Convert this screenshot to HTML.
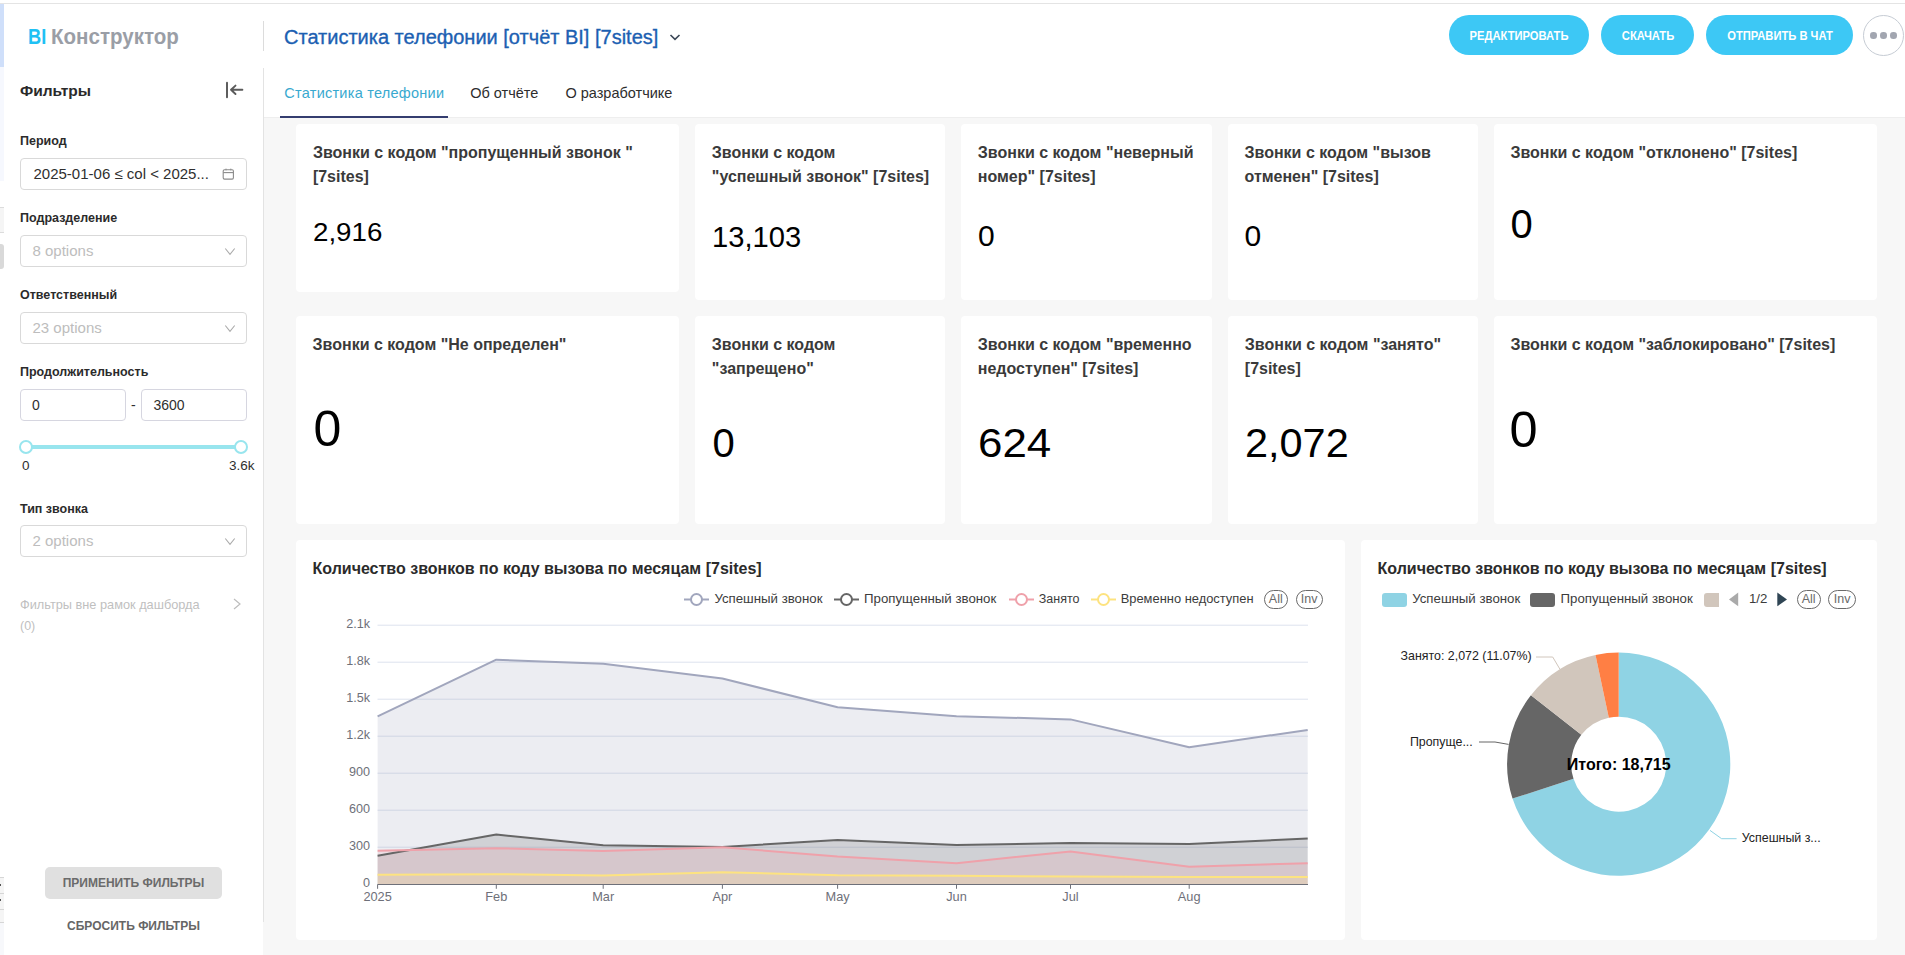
<!DOCTYPE html>
<html><head><meta charset="utf-8"><title>BI</title>
<style>
html,body{margin:0;padding:0;}
body{width:1905px;height:955px;overflow:hidden;position:relative;background:#fff;font-family:"Liberation Sans", sans-serif;}
.t{position:absolute;white-space:nowrap;line-height:1;}
.r{position:absolute;}
</style></head><body>
<div class="r" style="left:0px;top:3px;width:1905px;height:1px;background:#e4e4e4;"></div>
<div class="r" style="left:264px;top:118px;width:1641px;height:837px;background:#f7f7f7;"></div>
<div class="r" style="left:0px;top:4px;width:4px;height:63px;background:#cfdffa;"></div>
<div class="r" style="left:0px;top:67px;width:4px;height:114px;background:#f6f8fe;"></div>
<div class="r" style="left:0px;top:207px;width:4px;height:26px;background:#f5f5f5;border-top:1px solid #dcdcdc;border-bottom:1px solid #dcdcdc;box-sizing:border-box;"></div>
<div class="r" style="left:-4px;top:244px;width:8px;height:25px;background:#d9d9d9;border-radius:3px;"></div>
<div class="r" style="left:0px;top:877px;width:4px;height:45px;background:#f5f5f5;"></div>
<div class="r" style="left:0px;top:877px;width:4px;height:1px;background:#d6d6d6;"></div>
<div class="r" style="left:0px;top:893px;width:4px;height:1px;background:#d6d6d6;"></div>
<div class="r" style="left:0px;top:909px;width:4px;height:1px;background:#d6d6d6;"></div>
<div class="r" style="left:0px;top:922px;width:4px;height:1px;background:#d6d6d6;"></div>
<div class="r" style="left:0px;top:884px;width:1px;height:2px;background:#555;"></div>
<div class="r" style="left:0px;top:899px;width:1px;height:2px;background:#555;"></div>
<div class="r" style="left:0px;top:923px;width:4px;height:32px;background:#f7f8fb;"></div>
<div class="t" style="left:28.0px;top:27.0px;font-size:21.5px;color:#1fc1f4;font-weight:700;transform-origin:0 0;transform:scaleX(0.85);">BI</div>
<div class="t" style="left:51.0px;top:27.0px;font-size:21.5px;color:#9a9ea6;font-weight:700;transform-origin:0 0;transform:scaleX(0.955);">Конструктор</div>
<div class="r" style="left:263px;top:21px;width:1px;height:30px;background:#dcdcdc;"></div>
<div class="t" style="left:284.0px;top:27.0px;font-size:20px;color:#1c5fb2;font-weight:400;-webkit-text-stroke:0.35px #1c5fb2;">Статистика телефонии [отчёт BI] [7sites]</div>
<svg class="r" style="left:668px;top:31px" width="14" height="12" viewBox="0 0 14 12"><path d="M2.5 4 L7 8.3 L11.5 4" fill="none" stroke="#3b4757" stroke-width="1.6"/></svg>
<div class="r" style="left:1449px;top:15px;width:140px;height:40px;background:#3dc8f5;border-radius:20px;"></div>
<div class="t" style="left:1519.0px;top:30.0px;font-size:12.5px;color:#fff;font-weight:700;transform-origin:50% 0;transform:translateX(-50%) scaleX(0.895);">РЕДАКТИРОВАТЬ</div>
<div class="r" style="left:1601px;top:15px;width:93px;height:40px;background:#3dc8f5;border-radius:20px;"></div>
<div class="t" style="left:1647.5px;top:30.0px;font-size:12.5px;color:#fff;font-weight:700;transform-origin:50% 0;transform:translateX(-50%) scaleX(0.895);">СКАЧАТЬ</div>
<div class="r" style="left:1706px;top:15px;width:147px;height:40px;background:#3dc8f5;border-radius:20px;"></div>
<div class="t" style="left:1779.5px;top:30.0px;font-size:12.5px;color:#fff;font-weight:700;transform-origin:50% 0;transform:translateX(-50%) scaleX(0.895);">ОТПРАВИТЬ В ЧАТ</div>
<div class="r" style="left:1863px;top:15px;width:41px;height:41px;background:#fff;border:1px solid #c6ccd4;border-radius:50%;box-sizing:border-box;"></div>
<div class="r" style="left:1870.35px;top:32.25px;width:6.5px;height:6.5px;background:#a2a6b0;border-radius:50%;"></div>
<div class="r" style="left:1880.15px;top:32.25px;width:6.5px;height:6.5px;background:#a2a6b0;border-radius:50%;"></div>
<div class="r" style="left:1890.05px;top:32.25px;width:6.5px;height:6.5px;background:#a2a6b0;border-radius:50%;"></div>
<div class="r" style="left:263px;top:68px;width:1px;height:854px;background:#e3e3e3;"></div>
<div class="r" style="left:263px;top:922px;width:1px;height:33px;background:#f7f7f7;"></div>
<div class="t" style="left:20.0px;top:83.0px;font-size:15.5px;color:#2a2a2a;font-weight:700;">Фильтры</div>
<svg class="r" style="left:224px;top:80px" width="22" height="20" viewBox="0 0 22 20"><path d="M3 2.8 V17.2" stroke="#555" stroke-width="1.9" stroke-linecap="round"/><path d="M18.4 9.8 H7 M11.5 5.6 L7 9.8 L11.5 14" fill="none" stroke="#5a5a5a" stroke-width="1.9" stroke-linecap="round" stroke-linejoin="round"/></svg>
<div class="t" style="left:20.0px;top:135.0px;font-size:12.5px;color:#2b2b2b;font-weight:700;">Период</div>
<div class="r" style="left:20px;top:158px;width:227px;height:32px;background:#fff;border:1px solid #d9d9d9;border-radius:4px;box-sizing:border-box;"></div>
<div class="t" style="left:33.5px;top:166.0px;font-size:15px;color:#2f2f2f;font-weight:400;">2025-01-06 ≤ col &lt; 2025...</div>
<svg class="r" style="left:221px;top:167px" width="14" height="14" viewBox="0 0 14 14"><rect x="2.2" y="2.8" width="10.2" height="9.3" rx="1.3" fill="none" stroke="#8a8a8a" stroke-width="1.1"/><path d="M2.2 5.6 H12.4" stroke="#8a8a8a" stroke-width="1.1"/><path d="M5 1.6 V3.4 M9.8 1.6 V3.4" stroke="#8a8a8a" stroke-width="0.9"/></svg>
<div class="t" style="left:20.0px;top:212.0px;font-size:12.5px;color:#2b2b2b;font-weight:700;">Подразделение</div>
<div class="r" style="left:20px;top:235px;width:227px;height:32px;background:#fff;border:1px solid #d9d9d9;border-radius:4px;box-sizing:border-box;"></div>
<div class="t" style="left:32.5px;top:243.0px;font-size:15px;color:#bdbdbd;font-weight:400;">8 options</div>
<svg class="r" style="left:223px;top:247px" width="14" height="10" viewBox="0 0 14 10"><path d="M2.3 1.5 L7 7.4 L11.7 1.5" fill="none" stroke="#ababab" stroke-width="1.1"/></svg>
<div class="t" style="left:20.0px;top:289.0px;font-size:12.5px;color:#2b2b2b;font-weight:700;">Ответственный</div>
<div class="r" style="left:20px;top:312px;width:227px;height:32px;background:#fff;border:1px solid #d9d9d9;border-radius:4px;box-sizing:border-box;"></div>
<div class="t" style="left:32.5px;top:320.0px;font-size:15px;color:#bdbdbd;font-weight:400;">23 options</div>
<svg class="r" style="left:223px;top:324px" width="14" height="10" viewBox="0 0 14 10"><path d="M2.3 1.5 L7 7.4 L11.7 1.5" fill="none" stroke="#ababab" stroke-width="1.1"/></svg>
<div class="t" style="left:20.0px;top:366.0px;font-size:12.5px;color:#2b2b2b;font-weight:700;">Продолжительность</div>
<div class="r" style="left:20px;top:389px;width:106px;height:32px;background:#fff;border:1px solid #d6d6e0;border-radius:4px;box-sizing:border-box;"></div>
<div class="r" style="left:141px;top:389px;width:106px;height:32px;background:#fff;border:1px solid #d6d6e0;border-radius:4px;box-sizing:border-box;"></div>
<div class="t" style="left:32.0px;top:398.0px;font-size:14px;color:#2f2f2f;font-weight:400;">0</div>
<div class="t" style="left:131.0px;top:398.0px;font-size:14px;color:#2f2f2f;font-weight:400;">-</div>
<div class="t" style="left:153.5px;top:398.0px;font-size:14px;color:#2f2f2f;font-weight:400;">3600</div>
<div class="r" style="left:26px;top:445px;width:215px;height:4px;background:#98e5ee;"></div>
<div class="r" style="left:19px;top:440px;width:14px;height:14px;background:#fff;border:2px solid #98e5ee;border-radius:50%;box-sizing:border-box;"></div>
<div class="r" style="left:234px;top:440px;width:14px;height:14px;background:#fff;border:2px solid #98e5ee;border-radius:50%;box-sizing:border-box;"></div>
<div class="t" style="left:22.0px;top:459.0px;font-size:13.5px;color:#2f2f2f;font-weight:400;">0</div>
<div class="t" style="right:1650.5px;top:459.0px;font-size:13.5px;color:#2f2f2f;font-weight:400;">3.6k</div>
<div class="t" style="left:20.0px;top:503.0px;font-size:12.5px;color:#2b2b2b;font-weight:700;">Тип звонка</div>
<div class="r" style="left:20px;top:525px;width:227px;height:32px;background:#fff;border:1px solid #d9d9d9;border-radius:4px;box-sizing:border-box;"></div>
<div class="t" style="left:32.5px;top:533.0px;font-size:15px;color:#bdbdbd;font-weight:400;">2 options</div>
<svg class="r" style="left:223px;top:537px" width="14" height="10" viewBox="0 0 14 10"><path d="M2.3 1.5 L7 7.4 L11.7 1.5" fill="none" stroke="#ababab" stroke-width="1.1"/></svg>
<div class="t" style="left:20.0px;top:599.0px;font-size:12.75px;color:#bfbfbf;font-weight:400;">Фильтры вне рамок дашборда</div>
<div class="t" style="left:20.0px;top:620.0px;font-size:12.5px;color:#bfbfbf;font-weight:400;">(0)</div>
<svg class="r" style="left:231px;top:597px" width="12" height="14" viewBox="0 0 12 14"><path d="M3 2 L9 7 L3 12" fill="none" stroke="#bdbdbd" stroke-width="1.2"/></svg>
<div class="r" style="left:45px;top:867px;width:177px;height:32px;background:#e0e0e0;border-radius:5px;"></div>
<div class="t" style="left:133.5px;top:877.0px;font-size:12px;color:#6b6b6b;font-weight:700;transform:translateX(-50%);">ПРИМЕНИТЬ ФИЛЬТРЫ</div>
<div class="t" style="left:133.5px;top:920.0px;font-size:12px;color:#666;font-weight:700;transform:translateX(-50%);">СБРОСИТЬ ФИЛЬТРЫ</div>
<div class="t" style="left:284.3px;top:86.0px;font-size:14.5px;color:#38a9cf;font-weight:400;letter-spacing:0.25px;">Статистика телефонии</div>
<div class="t" style="left:470.2px;top:86.0px;font-size:14.5px;color:#2d2d2d;font-weight:400;">Об отчёте</div>
<div class="t" style="left:565.4px;top:86.0px;font-size:14.5px;color:#2d2d2d;font-weight:400;">О разработчике</div>
<div class="r" style="left:264px;top:117px;width:1641px;height:1px;background:#eeeeee;"></div>
<div class="r" style="left:280px;top:116px;width:168px;height:2px;background:#343d6f;"></div>
<div class="r" style="left:296px;top:124px;width:383px;height:168px;background:#fff;border-radius:4px;"></div>
<div class="r" style="left:695px;top:124px;width:250px;height:176px;background:#fff;border-radius:4px;"></div>
<div class="r" style="left:961px;top:124px;width:251px;height:176px;background:#fff;border-radius:4px;"></div>
<div class="r" style="left:1228px;top:124px;width:250px;height:176px;background:#fff;border-radius:4px;"></div>
<div class="r" style="left:1494px;top:124px;width:383px;height:176px;background:#fff;border-radius:4px;"></div>
<div class="r" style="left:296px;top:316px;width:383px;height:208px;background:#fff;border-radius:4px;"></div>
<div class="r" style="left:695px;top:316px;width:250px;height:208px;background:#fff;border-radius:4px;"></div>
<div class="r" style="left:961px;top:316px;width:251px;height:208px;background:#fff;border-radius:4px;"></div>
<div class="r" style="left:1228px;top:316px;width:250px;height:208px;background:#fff;border-radius:4px;"></div>
<div class="r" style="left:1494px;top:316px;width:383px;height:208px;background:#fff;border-radius:4px;"></div>
<div class="t" style="left:312.9px;top:145.0px;font-size:16px;color:#3a3a3a;font-weight:700;">Звонки с кодом "пропущенный звонок "</div>
<div class="t" style="left:312.9px;top:169.0px;font-size:16px;color:#3a3a3a;font-weight:700;">[7sites]</div>
<div class="t" style="left:312.5px;top:220.0px;font-size:25.5px;color:#000;font-weight:400;transform-origin:0 0;transform:scaleX(1.087);">2,916</div>
<div class="t" style="left:711.8px;top:145.0px;font-size:16px;color:#3a3a3a;font-weight:700;">Звонки с кодом</div>
<div class="t" style="left:711.8px;top:169.0px;font-size:16px;color:#3a3a3a;font-weight:700;">"успешный звонок" [7sites]</div>
<div class="t" style="left:711.5px;top:222.0px;font-size:30px;color:#000;font-weight:400;transform-origin:0 0;transform:scaleX(0.972);">13,103</div>
<div class="t" style="left:977.8px;top:145.0px;font-size:16px;color:#3a3a3a;font-weight:700;">Звонки с кодом "неверный</div>
<div class="t" style="left:977.8px;top:169.0px;font-size:16px;color:#3a3a3a;font-weight:700;">номер" [7sites]</div>
<div class="t" style="left:978.0px;top:221.0px;font-size:30px;color:#000;font-weight:400;">0</div>
<div class="t" style="left:1244.5px;top:145.0px;font-size:16px;color:#3a3a3a;font-weight:700;">Звонки с кодом "вызов</div>
<div class="t" style="left:1244.5px;top:169.0px;font-size:16px;color:#3a3a3a;font-weight:700;">отменен" [7sites]</div>
<div class="t" style="left:1244.5px;top:221.0px;font-size:30px;color:#000;font-weight:400;">0</div>
<div class="t" style="left:1510.4px;top:145.0px;font-size:16px;color:#3a3a3a;font-weight:700;">Звонки с кодом "отклонено" [7sites]</div>
<div class="t" style="left:1510.4px;top:204.0px;font-size:40px;color:#000;font-weight:400;">0</div>
<div class="t" style="left:312.6px;top:337.0px;font-size:16px;color:#3a3a3a;font-weight:700;">Звонки с кодом "Не определен"</div>
<div class="t" style="left:313.5px;top:404.0px;font-size:50px;color:#000;font-weight:400;">0</div>
<div class="t" style="left:711.8px;top:337.0px;font-size:16px;color:#3a3a3a;font-weight:700;">Звонки с кодом</div>
<div class="t" style="left:711.8px;top:361.0px;font-size:16px;color:#3a3a3a;font-weight:700;">"запрещено"</div>
<div class="t" style="left:712.5px;top:423.0px;font-size:40px;color:#000;font-weight:400;">0</div>
<div class="t" style="left:977.8px;top:337.0px;font-size:16px;color:#3a3a3a;font-weight:700;">Звонки с кодом "временно</div>
<div class="t" style="left:977.8px;top:361.0px;font-size:16px;color:#3a3a3a;font-weight:700;">недоступен" [7sites]</div>
<div class="t" style="left:977.5px;top:423.0px;font-size:40px;color:#000;font-weight:400;transform-origin:0 0;transform:scaleX(1.098);">624</div>
<div class="t" style="left:1244.8px;top:337.0px;font-size:16px;color:#3a3a3a;font-weight:700;">Звонки с кодом "занято"</div>
<div class="t" style="left:1244.8px;top:361.0px;font-size:16px;color:#3a3a3a;font-weight:700;">[7sites]</div>
<div class="t" style="left:1244.8px;top:423.0px;font-size:40px;color:#000;font-weight:400;transform-origin:0 0;transform:scaleX(1.036);">2,072</div>
<div class="t" style="left:1510.4px;top:337.0px;font-size:16px;color:#3a3a3a;font-weight:700;">Звонки с кодом "заблокировано" [7sites]</div>
<div class="t" style="left:1509.5px;top:405.0px;font-size:50.5px;color:#000;font-weight:400;">0</div>
<div class="r" style="left:296px;top:540px;width:1049px;height:400px;background:#fff;border-radius:4px;"></div>
<div class="r" style="left:1361px;top:540px;width:516px;height:400px;background:#fff;border-radius:4px;"></div>
<div class="t" style="left:312.5px;top:561.0px;font-size:16px;color:#2b2b2b;font-weight:700;">Количество звонков по коду вызова по месяцам [7sites]</div>
<div class="t" style="left:1377.5px;top:561.0px;font-size:16px;color:#2b2b2b;font-weight:700;">Количество звонков по коду вызова по месяцам [7sites]</div>
<svg class="r" style="left:0;top:0" width="1905" height="955" viewBox="0 0 1905 955"><line x1="377.5" y1="847.2" x2="1308" y2="847.2" stroke="#dde3ee" stroke-width="1"/><line x1="377.5" y1="810.2" x2="1308" y2="810.2" stroke="#dde3ee" stroke-width="1"/><line x1="377.5" y1="773.2" x2="1308" y2="773.2" stroke="#dde3ee" stroke-width="1"/><line x1="377.5" y1="736.2" x2="1308" y2="736.2" stroke="#dde3ee" stroke-width="1"/><line x1="377.5" y1="699.2" x2="1308" y2="699.2" stroke="#dde3ee" stroke-width="1"/><line x1="377.5" y1="662.2" x2="1308" y2="662.2" stroke="#dde3ee" stroke-width="1"/><line x1="377.5" y1="625.2" x2="1308" y2="625.2" stroke="#dde3ee" stroke-width="1"/><polygon points="377.6,884.2 377.6,716.3 496.3,659.7 603.2,663.7 722.4,678.5 837.6,707.3 956.5,716.2 1070.5,719.4 1189.2,747.2 1307.7,729.9 1307.7,884.2" fill="#A1A6BD" fill-opacity="0.2"/><polygon points="377.6,884.2 377.6,855.8 496.3,834.6 603.2,845.2 722.4,847.0 837.6,840.0 956.5,845.0 1070.5,843.1 1189.2,843.9 1307.7,838.5 1307.7,884.2" fill="#666666" fill-opacity="0.2"/><polygon points="377.6,884.2 377.6,850.7 496.3,848.2 603.2,851.0 722.4,847.2 837.6,856.5 956.5,863.2 1070.5,851.4 1189.2,866.8 1307.7,863.2 1307.7,884.2" fill="#EFA1AA" fill-opacity="0.2"/><polygon points="377.6,884.2 377.6,874.7 496.3,874.2 603.2,875.4 722.4,872.2 837.6,875.3 956.5,875.8 1070.5,876.6 1189.2,877.1 1307.7,877.1 1307.7,884.2" fill="#FDE380" fill-opacity="0.2"/><polyline points="377.6,716.3 496.3,659.7 603.2,663.7 722.4,678.5 837.6,707.3 956.5,716.2 1070.5,719.4 1189.2,747.2 1307.7,729.9" fill="none" stroke="#A1A6BD" stroke-width="2" stroke-linejoin="round"/><polyline points="377.6,855.8 496.3,834.6 603.2,845.2 722.4,847.0 837.6,840.0 956.5,845.0 1070.5,843.1 1189.2,843.9 1307.7,838.5" fill="none" stroke="#666666" stroke-width="2" stroke-linejoin="round"/><polyline points="377.6,850.7 496.3,848.2 603.2,851.0 722.4,847.2 837.6,856.5 956.5,863.2 1070.5,851.4 1189.2,866.8 1307.7,863.2" fill="none" stroke="#EFA1AA" stroke-width="2" stroke-linejoin="round"/><polyline points="377.6,874.7 496.3,874.2 603.2,875.4 722.4,872.2 837.6,875.3 956.5,875.8 1070.5,876.6 1189.2,877.1 1307.7,877.1" fill="none" stroke="#FDE380" stroke-width="2" stroke-linejoin="round"/><line x1="377.5" y1="884.5" x2="1308" y2="884.5" stroke="#6E7079" stroke-width="1"/><line x1="377.6" y1="884.5" x2="377.6" y2="888.8" stroke="#6E7079" stroke-width="1"/><line x1="496.3" y1="884.5" x2="496.3" y2="888.8" stroke="#6E7079" stroke-width="1"/><line x1="603.2" y1="884.5" x2="603.2" y2="888.8" stroke="#6E7079" stroke-width="1"/><line x1="722.4" y1="884.5" x2="722.4" y2="888.8" stroke="#6E7079" stroke-width="1"/><line x1="837.6" y1="884.5" x2="837.6" y2="888.8" stroke="#6E7079" stroke-width="1"/><line x1="956.5" y1="884.5" x2="956.5" y2="888.8" stroke="#6E7079" stroke-width="1"/><line x1="1070.5" y1="884.5" x2="1070.5" y2="888.8" stroke="#6E7079" stroke-width="1"/><line x1="1189.2" y1="884.5" x2="1189.2" y2="888.8" stroke="#6E7079" stroke-width="1"/></svg>
<div class="t" style="right:1535.0px;top:877.0px;font-size:12.6px;color:#6E7079;font-weight:400;">0</div>
<div class="t" style="right:1535.0px;top:840.0px;font-size:12.6px;color:#6E7079;font-weight:400;">300</div>
<div class="t" style="right:1535.0px;top:803.0px;font-size:12.6px;color:#6E7079;font-weight:400;">600</div>
<div class="t" style="right:1535.0px;top:766.0px;font-size:12.6px;color:#6E7079;font-weight:400;">900</div>
<div class="t" style="right:1535.0px;top:729.0px;font-size:12.6px;color:#6E7079;font-weight:400;">1.2k</div>
<div class="t" style="right:1535.0px;top:692.0px;font-size:12.6px;color:#6E7079;font-weight:400;">1.5k</div>
<div class="t" style="right:1535.0px;top:655.0px;font-size:12.6px;color:#6E7079;font-weight:400;">1.8k</div>
<div class="t" style="right:1535.0px;top:618.0px;font-size:12.6px;color:#6E7079;font-weight:400;">2.1k</div>
<div class="t" style="left:377.6px;top:891.0px;font-size:12.75px;color:#6E7079;font-weight:400;transform:translateX(-50%);">2025</div>
<div class="t" style="left:496.3px;top:891.0px;font-size:12.75px;color:#6E7079;font-weight:400;transform:translateX(-50%);">Feb</div>
<div class="t" style="left:603.2px;top:891.0px;font-size:12.75px;color:#6E7079;font-weight:400;transform:translateX(-50%);">Mar</div>
<div class="t" style="left:722.4px;top:891.0px;font-size:12.75px;color:#6E7079;font-weight:400;transform:translateX(-50%);">Apr</div>
<div class="t" style="left:837.6px;top:891.0px;font-size:12.75px;color:#6E7079;font-weight:400;transform:translateX(-50%);">May</div>
<div class="t" style="left:956.5px;top:891.0px;font-size:12.75px;color:#6E7079;font-weight:400;transform:translateX(-50%);">Jun</div>
<div class="t" style="left:1070.5px;top:891.0px;font-size:12.75px;color:#6E7079;font-weight:400;transform:translateX(-50%);">Jul</div>
<div class="t" style="left:1189.2px;top:891.0px;font-size:12.75px;color:#6E7079;font-weight:400;transform:translateX(-50%);">Aug</div>
<svg class="r" style="left:684px;top:591px" width="26" height="16" viewBox="0 0 26 16"><line x1="0" y1="8.5" x2="25" y2="8.5" stroke="#A1A6BD" stroke-width="2"/><circle cx="12.5" cy="8.5" r="5.5" fill="#fff" stroke="#A1A6BD" stroke-width="2"/></svg>
<div class="t" style="left:714.4px;top:592.0px;font-size:13.25px;color:#3c3c3c;font-weight:400;">Успешный звонок</div>
<svg class="r" style="left:834px;top:591px" width="26" height="16" viewBox="0 0 26 16"><line x1="0" y1="8.5" x2="25" y2="8.5" stroke="#666666" stroke-width="2"/><circle cx="12.5" cy="8.5" r="5.5" fill="#fff" stroke="#666666" stroke-width="2"/></svg>
<div class="t" style="left:864.0px;top:592.0px;font-size:13.25px;color:#3c3c3c;font-weight:400;">Пропущенный звонок</div>
<svg class="r" style="left:1008.5px;top:591px" width="26" height="16" viewBox="0 0 26 16"><line x1="0" y1="8.5" x2="25" y2="8.5" stroke="#EFA1AA" stroke-width="2"/><circle cx="12.5" cy="8.5" r="5.5" fill="#fff" stroke="#EFA1AA" stroke-width="2"/></svg>
<div class="t" style="left:1038.8px;top:593.0px;font-size:12.5px;color:#3c3c3c;font-weight:400;">Занято</div>
<svg class="r" style="left:1090.5px;top:591px" width="26" height="16" viewBox="0 0 26 16"><line x1="0" y1="8.5" x2="25" y2="8.5" stroke="#FDE380" stroke-width="2"/><circle cx="12.5" cy="8.5" r="5.5" fill="#fff" stroke="#FDE380" stroke-width="2"/></svg>
<div class="t" style="left:1120.7px;top:593.0px;font-size:12.9px;color:#3c3c3c;font-weight:400;">Временно недоступен</div>
<div class="r" style="left:1263.5px;top:590px;width:24.5px;height:19px;background:transparent;border:1px solid #6a6a6a;border-radius:10px;box-sizing:border-box;"></div>
<div class="t" style="left:1275.8px;top:593.0px;font-size:12.5px;color:#6a6a6a;font-weight:400;transform:translateX(-50%);">All</div>
<div class="r" style="left:1295.5px;top:590px;width:27.5px;height:19px;background:transparent;border:1px solid #6a6a6a;border-radius:10px;box-sizing:border-box;"></div>
<div class="t" style="left:1309.2px;top:593.0px;font-size:12.5px;color:#6a6a6a;font-weight:400;transform:translateX(-50%);">Inv</div>
<div class="r" style="left:1382px;top:592.5px;width:25px;height:14px;background:#8FD3E4;border-radius:3px;"></div>
<div class="t" style="left:1412.2px;top:592.0px;font-size:13.25px;color:#3c3c3c;font-weight:400;">Успешный звонок</div>
<div class="r" style="left:1530px;top:592.5px;width:25px;height:14px;background:#666666;border-radius:3px;"></div>
<div class="t" style="left:1560.5px;top:592.0px;font-size:13.25px;color:#3c3c3c;font-weight:400;">Пропущенный звонок</div>
<div class="r" style="left:1704.3px;top:592.5px;width:15px;height:14px;background:#D1C6BC;border-radius:3px 0 0 3px;"></div>
<svg class="r" style="left:1728px;top:591px" width="60" height="17" viewBox="0 0 60 17"><path d="M10.2 1.5 L1 8.4 L10.2 15.3 Z" fill="#aaa"/><path d="M49.3 1.5 L59 8.4 L49.3 15.3 Z" fill="#2f4554"/></svg>
<div class="t" style="left:1749.0px;top:592.0px;font-size:13.25px;color:#3c3c3c;font-weight:400;">1/2</div>
<div class="r" style="left:1796.7px;top:590px;width:23.899999999999864px;height:19px;background:transparent;border:1px solid #6a6a6a;border-radius:10px;box-sizing:border-box;"></div>
<div class="t" style="left:1808.7px;top:593.0px;font-size:12.5px;color:#6a6a6a;font-weight:400;transform:translateX(-50%);">All</div>
<div class="r" style="left:1828.4px;top:590px;width:27.59999999999991px;height:19px;background:transparent;border:1px solid #6a6a6a;border-radius:10px;box-sizing:border-box;"></div>
<div class="t" style="left:1842.2px;top:593.0px;font-size:12.5px;color:#6a6a6a;font-weight:400;transform:translateX(-50%);">Inv</div>
<svg class="r" style="left:0;top:0" width="1905" height="955" viewBox="0 0 1905 955"><path d="M1618.70 652.60 A111.6 111.6 0 1 1 1512.53 798.60 L1573.51 778.84 A47.5 47.5 0 1 0 1618.70 716.70 Z" fill="#8FD3E4"/><path d="M1512.53 798.60 A111.6 111.6 0 0 1 1530.93 695.28 L1581.34 734.86 A47.5 47.5 0 0 0 1573.51 778.84 Z" fill="#666666"/><path d="M1530.93 695.28 A111.6 111.6 0 0 1 1595.49 655.04 L1608.82 717.74 A47.5 47.5 0 0 0 1581.34 734.86 Z" fill="#D1C6BC"/><path d="M1595.49 655.04 A111.6 111.6 0 0 1 1618.70 652.60 L1618.70 716.70 A47.5 47.5 0 0 0 1608.82 717.74 Z" fill="#FF7F44"/><polyline points="1536,657 1552.7,657 1560,669.3" fill="none" stroke="#D1C6BC" stroke-width="1"/><polyline points="1479,742 1495,742 1508.6,744.4" fill="none" stroke="#666" stroke-width="1"/><polyline points="1710,830.4 1721.6,838.7 1736.6,838.7" fill="none" stroke="#8FD3E4" stroke-width="1"/></svg>
<div class="t" style="left:1400.6px;top:650.0px;font-size:12.4px;color:#222;font-weight:400;">Занято: 2,072 (11.07%)</div>
<div class="t" style="left:1409.9px;top:736.0px;font-size:12.4px;color:#222;font-weight:400;">Пропуще...</div>
<div class="t" style="left:1741.8px;top:832.0px;font-size:12.4px;color:#222;font-weight:400;">Успешный з...</div>
<div class="t" style="left:1618.7px;top:757.0px;font-size:16px;color:#000;font-weight:700;transform:translateX(-50%);">Итого: 18,715</div>
</body></html>
